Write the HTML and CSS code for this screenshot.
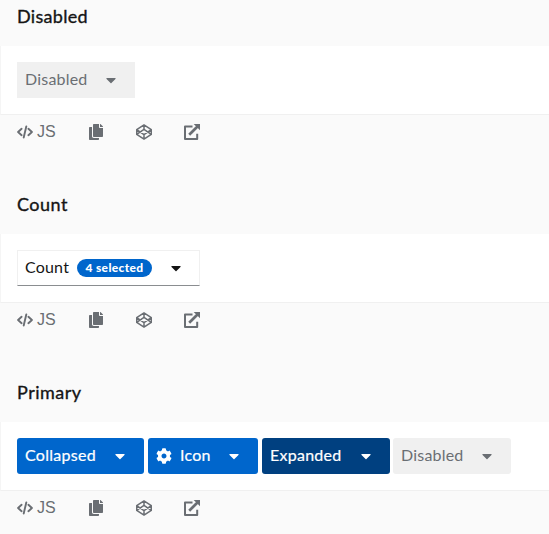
FILE: index.html
```html
<!DOCTYPE html>
<html lang="en">
<head>
<meta charset="utf-8">
<title>Toggle examples</title>
<link rel="stylesheet" href="styles.css">
</head>
<body>
<svg class="sprite" aria-hidden="true">
  <symbol id="caret" viewBox="0 0 320 512"><path d="M31.3 192h257.3c17.8 0 26.7 21.5 14.1 34.1L174.1 354.8c-7.8 7.8-20.5 7.8-28.3 0L17.2 226.1C4.6 213.5 13.5 192 31.3 192z"/></symbol>
  <symbol id="cog" viewBox="0 0 512 512"><path d="M487.4 315.7l-42.6-24.6c4.3-23.2 4.3-47 0-70.2l42.6-24.6c4.9-2.8 7.1-8.6 5.5-14-11.1-35.6-30-67.8-54.7-94.6-3.8-4.1-10-5.1-14.8-2.3L380.8 110c-17.9-15.4-38.5-27.3-60.8-35.1V25.8c0-5.6-3.9-10.5-9.4-11.7-36.7-8.2-74.3-7.8-109.2 0-5.5 1.2-9.4 6.1-9.4 11.7V75c-22.2 7.9-42.8 19.8-60.8 35.1L88.7 85.5c-4.9-2.8-11-1.9-14.8 2.3-24.7 26.7-43.6 58.9-54.7 94.6-1.7 5.4.6 11.2 5.5 14L67.3 221c-4.3 23.2-4.3 47 0 70.2l-42.6 24.6c-4.9 2.8-7.1 8.6-5.5 14 11.1 35.6 30 67.8 54.7 94.6 3.8 4.1 10 5.1 14.8 2.3l42.6-24.6c17.9 15.4 38.5 27.3 60.8 35.1v49.2c0 5.6 3.9 10.5 9.4 11.7 36.7 8.2 74.3 7.8 109.2 0 5.5-1.2 9.4-6.1 9.4-11.7v-49.2c22.2-7.9 42.8-19.8 60.8-35.1l42.6 24.6c4.9 2.8 11 1.9 14.8-2.3 24.7-26.7 43.6-58.9 54.7-94.6 1.5-5.5-.7-11.3-5.6-14.1zM256 336c-44.1 0-80-35.9-80-80s35.9-80 80-80 80 35.9 80 80-35.9 80-80 80z"/></symbol>
  <symbol id="code" viewBox="0 0 16 14"><path d="M4.6 3.8 1.1 7l3.5 3.2M11.4 3.8 14.9 7l-3.5 3.2M9.3 1.5 6.7 12.5" fill="none" stroke="currentColor" stroke-width="1.9" stroke-linecap="round" stroke-linejoin="round"/></symbol>
  <symbol id="copy" viewBox="0 0 448 512"><path d="M320 448v40c0 13.255-10.745 24-24 24H24c-13.255 0-24-10.745-24-24V120c0-13.255 10.745-24 24-24h72v296c0 30.879 25.121 56 56 56h168zm0-344V0H152c-13.255 0-24 10.745-24 24v368c0 13.255 10.745 24 24 24h272c13.255 0 24-10.745 24-24V128H344c-13.2 0-24-10.8-24-24zm120.971-31.029L375.029 7.029A24 24 0 0 0 358.059 0H352v96h96v-6.059a24 24 0 0 0-7.029-16.97z"/></symbol>
  <symbol id="pen" viewBox="0 0 16 16"><path d="M8 .9 15.3 5.6v4.8L8 15.1.7 10.4V5.6zM8 .9v4.4M8 10.7v4.4M.7 5.6 8 10.7l7.3-5.1M.7 10.4 8 5.3l7.3 5.1" fill="none" stroke="currentColor" stroke-width="1.5" stroke-linejoin="round"/></symbol>
  <symbol id="external" viewBox="0 0 16 16"><path d="M8.5 2.6H1v12.4h12.2V9.8" fill="none" stroke="currentColor" stroke-width="2" stroke-linejoin="round"/><path d="M5.2 10.8 13.5 2.5" stroke="currentColor" stroke-width="2.7"/><path d="M9.7 0H16v6.3z"/></symbol>
</svg>

<section class="example">
  <h3><span class="title-disabled">Disabled</span></h3>
  <div class="preview">
    <button class="toggle disabled w-disabled" disabled><span class="label">Disabled</span><svg class="caret"><use href="#caret"/></svg></button>
  </div>
  <div class="toolbar">
    <span class="lang"><svg class="i-code"><use href="#code"/></svg><span>JS</span></span>
    <svg class="i-copy"><use href="#copy"/></svg>
    <svg class="i-pen"><use href="#pen"/></svg>
    <svg class="i-ext"><use href="#external"/></svg>
  </div>
</section>

<section class="example">
  <h3><span class="title-count">Count</span></h3>
  <div class="preview">
    <button class="toggle outline w-count"><span class="label">Count</span><span class="badge">4 selected</span><svg class="caret"><use href="#caret"/></svg></button>
  </div>
  <div class="toolbar">
    <span class="lang"><svg class="i-code"><use href="#code"/></svg><span>JS</span></span>
    <svg class="i-copy"><use href="#copy"/></svg>
    <svg class="i-pen"><use href="#pen"/></svg>
    <svg class="i-ext"><use href="#external"/></svg>
  </div>
</section>

<section class="example">
  <h3><span class="title-primary">Primary</span></h3>
  <div class="preview">
    <button class="toggle primary w-collapsed"><span class="label">Collapsed</span><svg class="caret"><use href="#caret"/></svg></button>
    <button class="toggle primary w-icon"><svg class="cog"><use href="#cog"/></svg><span class="label">Icon</span><svg class="caret"><use href="#caret"/></svg></button>
    <button class="toggle primary expanded w-expanded"><span class="label">Expanded</span><svg class="caret"><use href="#caret"/></svg></button>
    <button class="toggle disabled rounded w-disabled" disabled><span class="label">Disabled</span><svg class="caret"><use href="#caret"/></svg></button>
  </div>
  <div class="toolbar">
    <span class="lang"><svg class="i-code"><use href="#code"/></svg><span>JS</span></span>
    <svg class="i-copy"><use href="#copy"/></svg>
    <svg class="i-pen"><use href="#pen"/></svg>
    <svg class="i-ext"><use href="#external"/></svg>
  </div>
</section>
</body>
</html>
```
FILE: styles.css
```css
* { box-sizing: border-box; }
body {
  margin: 0;
  background: #fafafa;
  color: #151515;
  font: 16px/24px Lato, sans-serif;
}
svg { display: block; flex: none; fill: currentColor; }
.sprite { display: none; }
.example { height: 188px; }
.example:last-child { height: 158px; }
h3 {
  margin: 0;
  height: 46px;
  padding: 3px 17px 0;
  font-size: 18px;
  line-height: 27px;
  font-weight: 400;
  -webkit-text-stroke: .35px currentColor;
}
.title-disabled { letter-spacing: .3px; }
.title-count { letter-spacing: .5px; }
.title-primary { letter-spacing: .5px; }
.preview {
  display: flex;
  gap: 4px;
  height: 69px;
  padding: 16px;
  background: #fff;
  border-left: 1px solid #f5f5f5;
  border-bottom: 1px solid #f0f0f0;
}
.toggle {
  display: flex;
  align-items: center;
  height: 36px;
  margin: 0;
  padding: 0 19px 0 8px;
  border: 0;
  background: #fff;
  color: #151515;
  font: inherit;
  white-space: nowrap;
}
.label { padding-bottom: 2px; letter-spacing: .2px; }
.caret { width: 10px; height: 16px; margin-left: auto; }
.disabled { background: #f0f0f0; color: #6a6e73; }
.rounded { border-radius: 3px; margin-left: -1px; }
.outline {
  padding: 0 18px 0 7px;
  border: 1px solid #f0f0f0;
  border-bottom-color: #8a8d90;
}
.primary { border-radius: 3px; background: #06c; color: #fff; -webkit-text-stroke: .2px currentColor; }
.expanded { background: #004080; }
.cog { width: 16px; height: 16px; margin-right: 8px; }
.w-disabled { width: 118px; }
.w-count { width: 183px; }
.w-collapsed { width: 127px; }
.w-collapsed .label { letter-spacing: .3px; }
.w-icon { width: 110px; }
.w-expanded { width: 128px; }
.w-expanded .label { letter-spacing: .25px; }
.badge {
  width: 75px;
  height: 18px;
  margin-left: 8px;
  border-radius: 9px;
  background: #06c;
  color: #fff;
  font-size: 12px;
  line-height: 18px;
  font-weight: 900;
  letter-spacing: .35px;
  text-align: center;
}
.w-count .label { width: 44px; text-align: left; }
.toolbar { display: flex; align-items: center; height: 34px; padding-left: 17px; color: #6a6e73; }
.lang { display: flex; align-items: center; gap: 4px; width: 72px; font-family: "Liberation Sans", sans-serif; font-size: 16px; }
.i-code { width: 16px; height: 14px; }
.i-copy { width: 14px; height: 16px; margin-right: 33px; }
.i-pen { width: 16px; height: 16px; margin-right: 32px; }
.i-ext { width: 16px; height: 16px; }
```
